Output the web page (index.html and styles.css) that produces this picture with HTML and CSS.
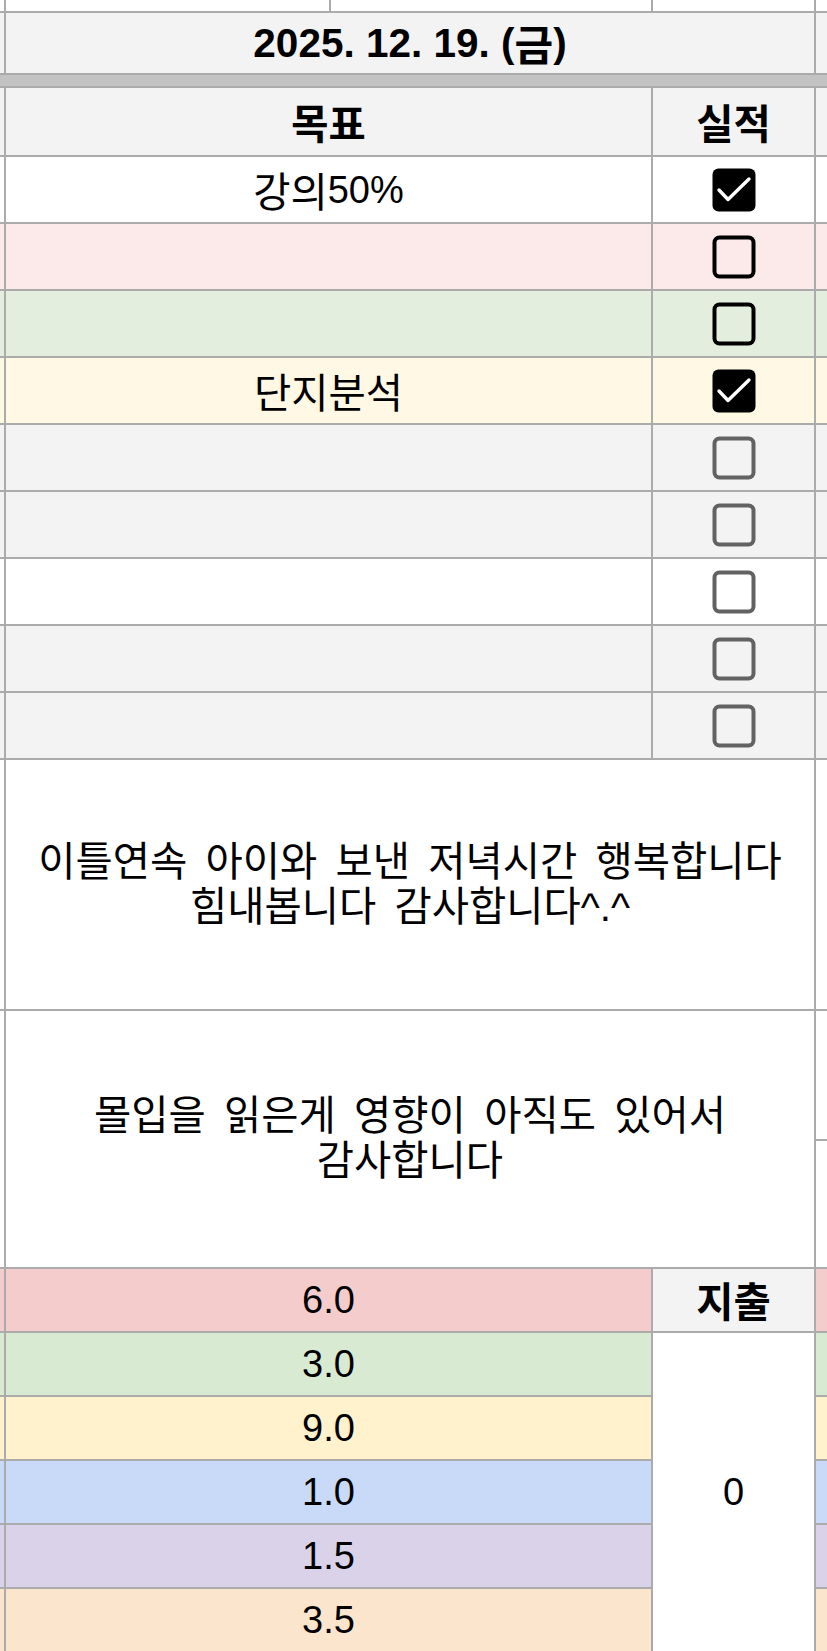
FILE: index.html
```html
<!DOCTYPE html>
<html lang="ko">
<head>
<meta charset="utf-8">
<title>2025. 12. 19. (금)</title>
<link rel="stylesheet" href="styles.css">
</head>
<body>
<div class="sheet">
  <!-- partial top row -->
  <div class="c sl bg-w"></div>
  <div class="c a1 bg-w"></div>
  <div class="c a2 bg-w"></div>
  <div class="c b bg-w"></div>
  <div class="c sr bg-w"></div>

  <!-- date row -->
  <div class="c sl bg-g"></div>
  <div class="c span3 bg-g bold date">2025. 12. 19. (<span class="ko">금</span>)</div>
  <div class="c sr bg-g"></div>

  <!-- frozen divider -->
  <div class="band"></div>

  <!-- header -->
  <div class="c sl bg-g"></div>
  <div class="c a bg-g bold"><span class="ko">목표</span></div>
  <div class="c b bg-g bold"><span class="ko">실적</span></div>
  <div class="c sr bg-g"></div>

  <!-- goals -->
  <div class="c sl bg-w"></div>
  <div class="c a bg-w"><span class="ko">강의</span>50%</div>
  <div class="c b bg-w"><svg class="cb" viewBox="0 0 44 44"><rect x="0.5" y="0.5" width="43" height="43" rx="6" fill="#000"/><polyline points="7,22 16,31.5 37,11" fill="none" stroke="#fff" stroke-width="3.4" stroke-linecap="round" stroke-linejoin="round"/></svg></div>
  <div class="c sr bg-w"></div>

  <div class="c sl bg-pink"></div>
  <div class="c a bg-pink"></div>
  <div class="c b bg-pink"><svg class="cb" viewBox="0 0 44 44"><rect x="2.5" y="2.5" width="39" height="39" rx="5" fill="none" stroke="#000" stroke-width="4"/></svg></div>
  <div class="c sr bg-pink"></div>

  <div class="c sl bg-green"></div>
  <div class="c a bg-green"></div>
  <div class="c b bg-green"><svg class="cb" viewBox="0 0 44 44"><rect x="2.5" y="2.5" width="39" height="39" rx="5" fill="none" stroke="#000" stroke-width="4"/></svg></div>
  <div class="c sr bg-green"></div>

  <div class="c sl bg-yellow"></div>
  <div class="c a bg-yellow"><span class="ko">단지분석</span></div>
  <div class="c b bg-yellow"><svg class="cb" viewBox="0 0 44 44"><rect x="0.5" y="0.5" width="43" height="43" rx="6" fill="#000"/><polyline points="7,22 16,31.5 37,11" fill="none" stroke="#fff" stroke-width="3.4" stroke-linecap="round" stroke-linejoin="round"/></svg></div>
  <div class="c sr bg-yellow"></div>

  <div class="c sl bg-g"></div>
  <div class="c a bg-g"></div>
  <div class="c b bg-g"><svg class="cb" viewBox="0 0 44 44"><rect x="2.5" y="2.5" width="39" height="39" rx="5" fill="none" stroke="#626262" stroke-width="4"/></svg></div>
  <div class="c sr bg-g"></div>

  <div class="c sl bg-g"></div>
  <div class="c a bg-g"></div>
  <div class="c b bg-g"><svg class="cb" viewBox="0 0 44 44"><rect x="2.5" y="2.5" width="39" height="39" rx="5" fill="none" stroke="#626262" stroke-width="4"/></svg></div>
  <div class="c sr bg-g"></div>

  <div class="c sl bg-w"></div>
  <div class="c a bg-w"></div>
  <div class="c b bg-w"><svg class="cb" viewBox="0 0 44 44"><rect x="2.5" y="2.5" width="39" height="39" rx="5" fill="none" stroke="#626262" stroke-width="4"/></svg></div>
  <div class="c sr bg-w"></div>

  <div class="c sl bg-g"></div>
  <div class="c a bg-g"></div>
  <div class="c b bg-g"><svg class="cb" viewBox="0 0 44 44"><rect x="2.5" y="2.5" width="39" height="39" rx="5" fill="none" stroke="#626262" stroke-width="4"/></svg></div>
  <div class="c sr bg-g"></div>

  <div class="c sl bg-g"></div>
  <div class="c a bg-g"></div>
  <div class="c b bg-g"><svg class="cb" viewBox="0 0 44 44"><rect x="2.5" y="2.5" width="39" height="39" rx="5" fill="none" stroke="#626262" stroke-width="4"/></svg></div>
  <div class="c sr bg-g"></div>

  <!-- memo 1 -->
  <div class="c sl bg-w"></div>
  <div class="c span3 bg-w memo">이틀연속 아이와 보낸 저녁시간 행복합니다<br>힘내봅니다 감사합니다^.^</div>
  <div class="c sr bg-w"></div>

  <!-- memo 2 -->
  <div class="c sl rs2 bg-w"></div>
  <div class="c span3 rs2 bg-w memo">몰입을 읽은게 영향이 아직도 있어서<br>감사합니다</div>
  <div class="c sr bg-w"></div>
  <div class="c sr bg-w"></div>

  <!-- numbers -->
  <div class="c sl n-red"></div>
  <div class="c a n-red">6.0</div>
  <div class="c b bg-g bold"><span class="ko">지출</span></div>
  <div class="c sr n-red"></div>

  <div class="c sl n-green"></div>
  <div class="c a n-green">3.0</div>
  <div class="c b rs5 bg-w">0</div>
  <div class="c sr n-green"></div>

  <div class="c sl n-yellow"></div>
  <div class="c a n-yellow">9.0</div>
  <div class="c sr n-yellow"></div>

  <div class="c sl n-blue"></div>
  <div class="c a n-blue">1.0</div>
  <div class="c sr n-blue"></div>

  <div class="c sl n-purple"></div>
  <div class="c a n-purple">1.5</div>
  <div class="c sr n-purple"></div>

  <div class="c sl n-orange"></div>
  <div class="c a n-orange">3.5</div>
  <div class="c sr n-orange"></div>
</div>
</body>
</html>
```

FILE: styles.css
```css
html, body {
  margin: 0;
  padding: 0;
  background: #ffffff;
}

.sheet {
  width: 827px;
  height: 1651px;
  overflow: hidden;
  display: grid;
  grid-template-columns: 4px 323px 320px 161px 11px;
  grid-template-rows:
    11px 60px 11px 67px
    65px 65px 65px 65px 65px 65px 65px 65px 65px
    249px 128px 126px
    62px 62px 62px 62px 62px 62px;
  gap: 2px;
  background: #ababab;
  font-family: "Liberation Sans", "Noto Sans CJK KR", sans-serif;
  font-size: 38px;
  color: #000;
}

.c {
  display: flex;
  align-items: center;
  justify-content: center;
  text-align: center;
  line-height: 44px;
  overflow: hidden;
  white-space: nowrap;
}

.sl { grid-column: 1; }
.a1 { grid-column: 2; }
.a2 { grid-column: 3; }
.a { grid-column: 2 / 4; }
.b { grid-column: 4; }
.sr { grid-column: 5; }
.span3 { grid-column: 2 / 5; }
.rs2 { grid-row: span 2; }
.rs5 { grid-row: span 5; }

.band {
  grid-column: 1 / 6;
  background: #c3c3c3;
}

.bold { font-weight: 700; }

.date {
  font-size: 40.5px;
}

.ko {
  font-family: "Noto Sans CJK KR", sans-serif;
  font-size: 40.5px;
}

.date .ko {
  font-size: 42px;
}

.memo {
  white-space: normal;
  font-size: 40.5px;
  word-spacing: 7px;
  line-height: 45px;
}

.cb {
  width: 44px;
  height: 44px;
  display: block;
}

.bg-w { background: #ffffff; }
.bg-g { background: #f3f3f3; }
.bg-pink { background: #fce9ea; }
.bg-green { background: #e4eedf; }
.bg-yellow { background: #fef8e5; }

.n-red { background: #f4cccc; }
.n-green { background: #d9ead3; }
.n-yellow { background: #fff2cc; }
.n-blue { background: #c9daf8; }
.n-purple { background: #d9d2e9; }
.n-orange { background: #fce5cd; }
```
